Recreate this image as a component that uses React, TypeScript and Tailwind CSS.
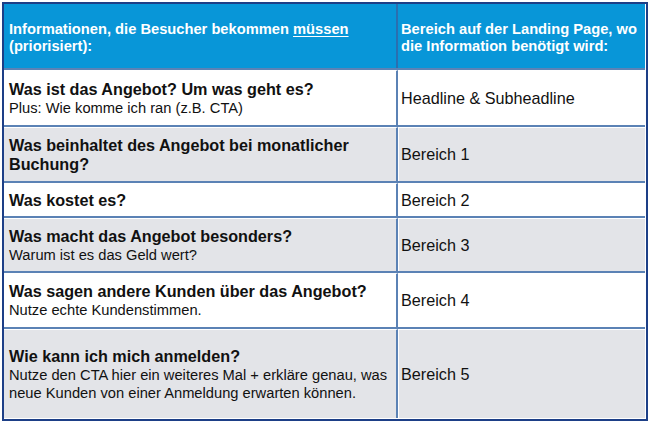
import React from "react";

type Row = {
	title: string;
	sub?: string;
	area: string;
	gray: boolean;
	height: string;
};

const rows: Row[] = [
	{
		title: "Was ist das Angebot? Um was geht es?",
		sub: "Plus: Wie komme ich ran (z.B. CTA)",
		area: "Headline & Subheadline",
		gray: false,
		height: "h-[57px]",
	},
	{
		title: "Was beinhaltet des Angebot bei monatlicher Buchung?",
		area: "Bereich 1",
		gray: true,
		height: "h-[56px]",
	},
	{
		title: "Was kostet es?",
		area: "Bereich 2",
		gray: false,
		height: "h-[35px]",
	},
	{
		title: "Was macht das Angebot besonders?",
		sub: "Warum ist es das Geld wert?",
		area: "Bereich 3",
		gray: true,
		height: "h-[55px]",
	},
	{
		title: "Was sagen andere Kunden über das Angebot?",
		sub: "Nutze echte Kundenstimmen.",
		area: "Bereich 4",
		gray: false,
		height: "h-[56px]",
	},
	{
		title: "Wie kann ich mich anmelden?",
		sub: "Nutze den CTA hier ein weiteres Mal + erkläre genau, was neue Kunden von einer Anmeldung erwarten können.",
		area: "Bereich 5",
		gray: true,
		height: "h-[91px]",
	},
];

const App = () => {
	return (
		<div className="bg-white p-[2px] font-['Liberation_Sans',Arial,sans-serif] text-[#111]">
			<div className="w-[646px] border-2 border-[#1d3f87] bg-white pr-px pb-px">
				{/* header */}
				<div className="grid h-[64px] grid-cols-[394px_1fr] bg-[#0896d8] text-[14.7px] font-bold leading-[17px] text-white">
					<div className="flex items-center border-r-2 border-[#2a6fb0] pl-[5px] pt-[3px]">
						<p>
							Informationen, die Besucher bekommen{" "}
							<span className="underline underline-offset-2">müssen</span>
							<br />
							(priorisiert):
						</p>
					</div>
					<div className="flex items-center pl-[3px] pt-[3px]">
						<p>
							Bereich auf der Landing Page, wo
							<br />
							die Information benötigt wird:
						</p>
					</div>
				</div>

				{rows.map((row, i) => (
					<div
						key={i}
						className={`grid grid-cols-[394px_1fr] border-t-2 border-[#5b82b5] ${row.height} ${
							row.gray ? "bg-[#e3e4e8]" : "bg-white"
						}`}
					>
						<div className="flex flex-col justify-center border-t border-r-2 border-t-white border-r-[#5b82b5] pl-[5px] pr-1">
							<div className="text-[16.2px] font-bold leading-[19px]">{row.title}</div>
							{row.sub && (
								<div className="text-[14.7px] leading-[18px]">{row.sub}</div>
							)}
						</div>
						<div className="flex items-center border-t border-l border-white pl-[2px] text-[16.2px]">
							{row.area}
						</div>
					</div>
				))}
			</div>
		</div>
	);
};

export default App;
